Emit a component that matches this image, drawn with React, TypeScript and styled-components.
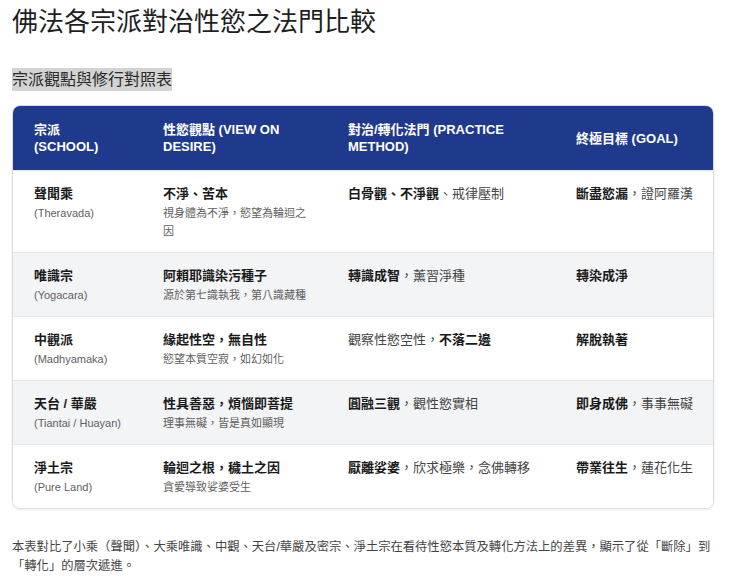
import React from "react";
import styled, { createGlobalStyle } from "styled-components";

const Global = createGlobalStyle`
  html, body { margin: 0; padding: 0; background: #ffffff; }
  body {
    font-family: "Liberation Sans", "Noto Sans CJK TC", Arial, sans-serif;
    color: #1f1f1f;
  }
`;

const Page = styled.div`
  padding: 4px 26px 0 12px;
  width: 740px;
  box-sizing: border-box;
`;

const Title = styled.h1`
  margin: 0;
  font-size: 26px;
  font-weight: 400;
  line-height: 36px;
  color: #1f1f1f;
  font-family: "Liberation Sans", "Noto Sans CJK TC", sans-serif;
`;

const Subtitle = styled.h2`
  margin: 28px 0 0 0;
  font-size: 16px;
  font-weight: 400;
  line-height: 23px;
  display: inline-block;
  background: #d3d3d3;
  color: #2a2a2a;
`;

const Card = styled.div`
  margin-top: 14px;
  border: 1px solid #dcdcdc;
  border-radius: 8px;
  overflow: hidden;
  box-shadow: 0 1px 3px rgba(0, 0, 0, 0.08);
`;

const Table = styled.table`
  width: 100%;
  border-collapse: collapse;
  table-layout: fixed;
`;

const HeadRow = styled.tr`
  background: #1f3a8c;
`;

const Th = styled.th<{ $w: number }>`
  width: ${(p) => p.$w}px;
  text-align: left;
  color: #ffffff;
  font-size: 13px;
  font-weight: 700;
  line-height: 17px;
  padding: 15px 16px 15px 21px;
  height: 64px;
  box-sizing: border-box;
  vertical-align: middle;
`;

const Row = styled.tr<{ $alt: boolean }>`
  background: ${(p) => (p.$alt ? "#f3f4f6" : "#ffffff")};
  border-top: 1px solid #e5e7eb;
`;

const Td = styled.td`
  vertical-align: top;
  padding: 12px 16px 12px 21px;
  font-size: 13px;
  line-height: 21px;
  color: #333;
`;

const Main = styled.div`
  font-weight: 700;
  color: #1a1a1a;
  font-size: 13px;
  line-height: 21px;
`;

const Sub = styled.div`
  font-size: 11px;
  line-height: 18px;
  color: #5f5f5f;
`;

const B = styled.b`
  font-weight: 700;
  color: #1a1a1a;
`;

const Plain = styled.span`
  color: #444;
`;

const Note = styled.p`
  margin: 29px 0 0 0;
  font-size: 12.3px;
  line-height: 19px;
  color: #444;
`;

type Seg = { t: string; b?: boolean };

const rows: {
  school: string;
  en: string;
  view: string;
  viewSub: string;
  method: Seg[];
  goal: Seg[];
}[] = [
  {
    school: "聲聞乘",
    en: "(Theravada)",
    view: "不淨、苦本",
    viewSub: "視身體為不淨，慾望為輪迴之因",
    method: [{ t: "白骨觀、不淨觀", b: true }, { t: "、戒律壓制" }],
    goal: [{ t: "斷盡慾漏", b: true }, { t: "，證阿羅漢" }],
  },
  {
    school: "唯識宗",
    en: "(Yogacara)",
    view: "阿賴耶識染污種子",
    viewSub: "源於第七識執我，第八識藏種",
    method: [{ t: "轉識成智", b: true }, { t: "，薰習淨種" }],
    goal: [{ t: "轉染成淨", b: true }],
  },
  {
    school: "中觀派",
    en: "(Madhyamaka)",
    view: "緣起性空，無自性",
    viewSub: "慾望本質空寂，如幻如化",
    method: [{ t: "觀察性慾空性，" }, { t: "不落二邊", b: true }],
    goal: [{ t: "解脫執著", b: true }],
  },
  {
    school: "天台 / 華嚴",
    en: "(Tiantai / Huayan)",
    view: "性具善惡，煩惱即菩提",
    viewSub: "理事無礙，皆是真如顯現",
    method: [{ t: "圓融三觀", b: true }, { t: "，觀性慾實相" }],
    goal: [{ t: "即身成佛", b: true }, { t: "，事事無礙" }],
  },
  {
    school: "淨土宗",
    en: "(Pure Land)",
    view: "輪迴之根，穢土之因",
    viewSub: "貪愛導致娑婆受生",
    method: [{ t: "厭離娑婆", b: true }, { t: "，欣求極樂，念佛轉移" }],
    goal: [{ t: "帶業往生", b: true }, { t: "，蓮花化生" }],
  },
];

const renderSegs = (segs: Seg[]) =>
  segs.map((s, i) => (s.b ? <B key={i}>{s.t}</B> : <Plain key={i}>{s.t}</Plain>));

export default function App() {
  return (
    <>
      <Global />
      <Page>
        <Title>佛法各宗派對治性慾之法門比較</Title>
        <Subtitle>宗派觀點與修行對照表</Subtitle>
        <Card>
          <Table>
            <thead>
              <HeadRow>
                <Th $w={129}>宗派 (SCHOOL)</Th>
                <Th $w={185}>性慾觀點 (VIEW ON DESIRE)</Th>
                <Th $w={228}>對治/轉化法門 (PRACTICE METHOD)</Th>
                <Th $w={158}>終極目標 (GOAL)</Th>
              </HeadRow>
            </thead>
            <tbody>
              {rows.map((r, i) => (
                <Row key={r.school} $alt={i % 2 === 1}>
                  <Td>
                    <Main>{r.school}</Main>
                    <Sub>{r.en}</Sub>
                  </Td>
                  <Td>
                    <Main>{r.view}</Main>
                    <Sub>{r.viewSub}</Sub>
                  </Td>
                  <Td>{renderSegs(r.method)}</Td>
                  <Td>{renderSegs(r.goal)}</Td>
                </Row>
              ))}
            </tbody>
          </Table>
        </Card>
        <Note>
          本表對比了小乘（聲聞）、大乘唯識、中觀、天台/華嚴及密宗、淨土宗在看待性慾本質及轉化方法上的差異，顯示了從「斷除」到「轉化」的層次遞進。
        </Note>
      </Page>
    </>
  );
}
